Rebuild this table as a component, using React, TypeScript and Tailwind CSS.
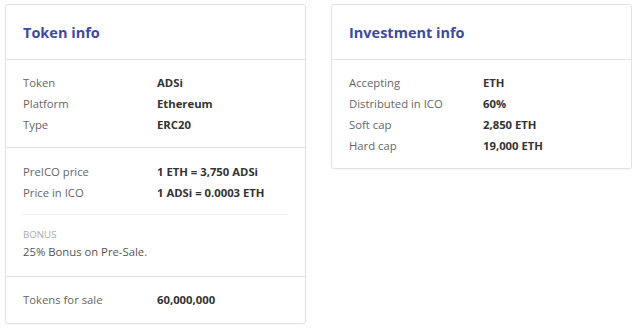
import React from 'react';

type Row = { label: string; value: string };

const InfoRows = ({ rows }: { rows: Row[] }) => (
  <div>
    {rows.map((r) => (
      <div key={r.label} className="flex leading-[21px]">
        <span className="w-[134px] shrink-0 text-[#666]">{r.label}</span>
        <span className="font-bold text-[#333]">{r.value}</span>
      </div>
    ))}
  </div>
);

const Card = ({ title, children }: { title: string; children: React.ReactNode }) => (
  <div className="w-[301px] rounded-[3px] border border-[#e2e2e2] bg-white shadow-[0_1px_2px_rgba(0,0,0,0.04)]">
    <div className="h-[55px] flex items-center px-[17px] border-b border-[#e2e2e2]">
      <h2 className="text-[14.5px] font-bold text-[#3e4aa1] mt-[1px]">{title}</h2>
    </div>
    {children}
  </div>
);

const App = () => {
  return (
    <div
      className="w-[640px] h-[332px] bg-white flex items-start gap-[25px] pl-[5px] pt-[4px] text-[11.3px]"
      style={{ fontFamily: '"Open Sans", "Liberation Sans", sans-serif' }}
    >
      <Card title="Token info">
        <div className="px-[17px] py-[12px] border-b border-[#e2e2e2]">
          <InfoRows
            rows={[
              { label: 'Token', value: 'ADSi' },
              { label: 'Platform', value: 'Ethereum' },
              { label: 'Type', value: 'ERC20' },
            ]}
          />
        </div>
        <div className="px-[17px] pt-[13px] pb-[14px] border-b border-[#e2e2e2]">
          <InfoRows
            rows={[
              { label: 'PreICO price', value: '1 ETH = 3,750 ADSi' },
              { label: 'Price in ICO', value: '1 ADSi = 0.0003 ETH' },
            ]}
          />
          <div className="mt-[11px] mb-[13px] border-t border-[#eeeeee]" />
          <div className="text-[9.7px] leading-[13px] uppercase text-[#aaa]">Bonus</div>
          <div className="leading-[21px] text-[#555]">25% Bonus on Pre-Sale.</div>
        </div>
        <div className="px-[17px] pt-[12px] pb-[13px]">
          <InfoRows rows={[{ label: 'Tokens for sale', value: '60,000,000' }]} />
        </div>
      </Card>
      <Card title="Investment info">
        <div className="px-[17px] py-[12px]">
          <InfoRows
            rows={[
              { label: 'Accepting', value: 'ETH' },
              { label: 'Distributed in ICO', value: '60%' },
              { label: 'Soft cap', value: '2,850 ETH' },
              { label: 'Hard cap', value: '19,000 ETH' },
            ]}
          />
        </div>
      </Card>
    </div>
  );
};

export default App;
